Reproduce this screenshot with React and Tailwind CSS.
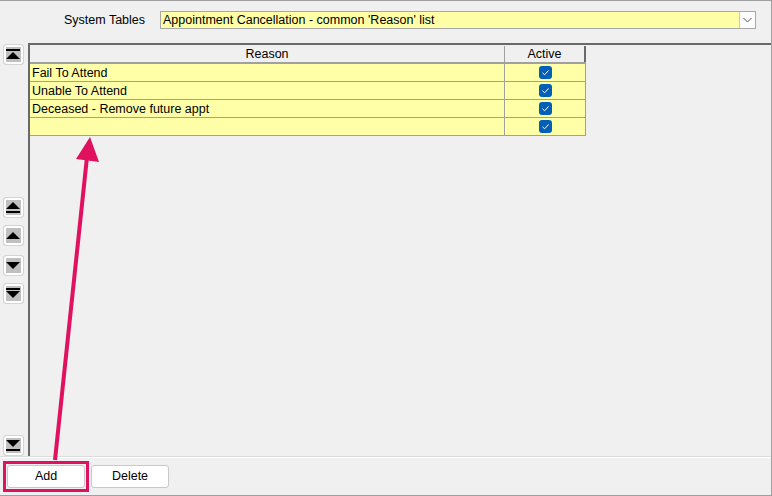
import React from "react";

const rows = [
  { reason: "Fail To Attend", active: true },
  { reason: "Unable To Attend", active: true },
  { reason: "Deceased - Remove future appt", active: true },
  { reason: "", active: true },
];

// first: bar over up-triangle, eject: up-triangle over bar, etc.
const icons = {
  first: (
    <>
      <rect x="0" y="0" width="14" height="2" fill="#000" />
      <polygon points="7,3 14,10 0,10" fill="#000" />
    </>
  ),
  eject: (
    <>
      <polygon points="7,0 14,7 0,7" fill="#000" />
      <rect x="0" y="9" width="14" height="2" fill="#000" />
    </>
  ),
  up: <polygon points="7,2 14,9 0,9" fill="#000" />,
  down: <polygon points="0,2 14,2 7,9" fill="#000" />,
  barDown: (
    <>
      <rect x="0" y="0" width="14" height="2" fill="#000" />
      <polygon points="0,3 14,3 7,10" fill="#000" />
    </>
  ),
  last: (
    <>
      <polygon points="0,0 14,0 7,7" fill="#000" />
      <rect x="0" y="9" width="14" height="2" fill="#000" />
    </>
  ),
};

const MoveButton = ({ kind, className = "" }) => (
  <button
    className={
      "flex h-[21px] w-[21px] items-center justify-center rounded-[3px] border border-[#d4d4d4] bg-[#c0c0c0] shadow-[inset_0_0_0_2px_#fff] " +
      className
    }
  >
    <svg width="14" height="11" viewBox="0 0 14 11">
      {icons[kind]}
    </svg>
  </button>
);

const Check = () => (
  <div className="flex h-[13px] w-[13px] items-center justify-center rounded-[3px] bg-[#005fb8]">
    <svg width="9" height="9" viewBox="0 0 9 9">
      <path d="M1.5 4.8 L3.6 6.8 L7.6 2.4" fill="none" stroke="#fff" strokeWidth="1" />
    </svg>
  </div>
);

export default function App() {
  return (
    <div
      className="relative flex h-[496px] w-[772px] flex-col overflow-hidden border-t border-r border-b border-[#a0a0a0] bg-[#f0f0f0] text-[12.5px] text-black"
      style={{ fontFamily: "'Liberation Sans', Arial, sans-serif" }}
    >
      {/* header */}
      <div className="flex h-[42px] items-center pl-[64px] pr-[15px] pb-[4px]">
        <span className="w-[96px]">System Tables</span>
        <div className="flex h-[18px] flex-1 items-center border border-[#a8a8a8] bg-[#ffffa8] pl-[2px]">
          <span className="flex-1">Appointment Cancellation - common 'Reason' list</span>
          <div className="flex h-[16px] w-[16px] items-center justify-center border-l border-[#c8c8c8] bg-[#fcfcfc]">
            <svg width="9" height="6" viewBox="0 0 9 6">
              <path d="M0.5 1 L4.5 5 L8.5 1" fill="none" stroke="#555" strokeWidth="1" />
            </svg>
          </div>
        </div>
      </div>

      {/* body */}
      <div className="flex flex-1">
        <div className="flex w-[28px] flex-col items-center pt-[1px] pb-[0px] pr-[2px]">
          <MoveButton kind="first" />
          <div className="flex flex-1 flex-col items-center gap-[7px] pt-[132px]">
            <MoveButton kind="eject" />
            <MoveButton kind="up" className="mb-[2px]" />
            <MoveButton kind="down" />
            <MoveButton kind="barDown" />
          </div>
          <MoveButton kind="last" />
        </div>
        <div className="flex-1 border-t-2 border-l-2 border-[#696969]">
          <div className="w-[556px]">
            <div className="flex h-[19px] border-b-2 border-[#a0a0a0] bg-[#f0f0f0] pt-[1px]">
              <div className="flex w-[475px] items-center justify-center border-r border-[#a0a0a0]">
                Reason
              </div>
              <div className="flex w-[81px] items-center justify-center border-r-2 border-[#696969]">
                Active
              </div>
            </div>
            {rows.map((r, i) => (
              <div key={i} className="flex h-[18px] border-b border-[#a0a0a0] bg-[#ffffa8]">
                <div className="flex w-[475px] items-center border-r border-[#a0a0a0] pl-[2px] pt-[1px]">
                  {r.reason}
                </div>
                <div className="flex w-[81px] items-center justify-center border-r border-[#a0a0a0]">
                  {r.active && <Check />}
                </div>
              </div>
            ))}
          </div>
        </div>
      </div>

      {/* footer */}
      <div className="flex h-[39px] items-center gap-[6px] border-t border-[#dcdcdc] pl-[7px] shadow-[inset_0_1px_0_#fff]">
        <div className="relative">
          <button className="h-[23px] w-[78px] rounded-[3px] border border-[#c8c8c8] bg-white">Add</button>
          <div className="pointer-events-none absolute -top-[4px] -left-[4px] h-[31px] w-[86px] border-[3px] border-[#e0115f]" />
        </div>
        <button className="h-[23px] w-[78px] rounded-[3px] border border-[#c8c8c8] bg-white">Delete</button>
      </div>

      {/* annotation arrow */}
      <svg className="pointer-events-none absolute left-0 top-0" width="772" height="496">
        <line x1="55" y1="459" x2="87" y2="156" stroke="#e0115f" strokeWidth="4" />
        <polygon points="90,136 76,158 99,161" fill="#e0115f" />
      </svg>
    </div>
  );
}
